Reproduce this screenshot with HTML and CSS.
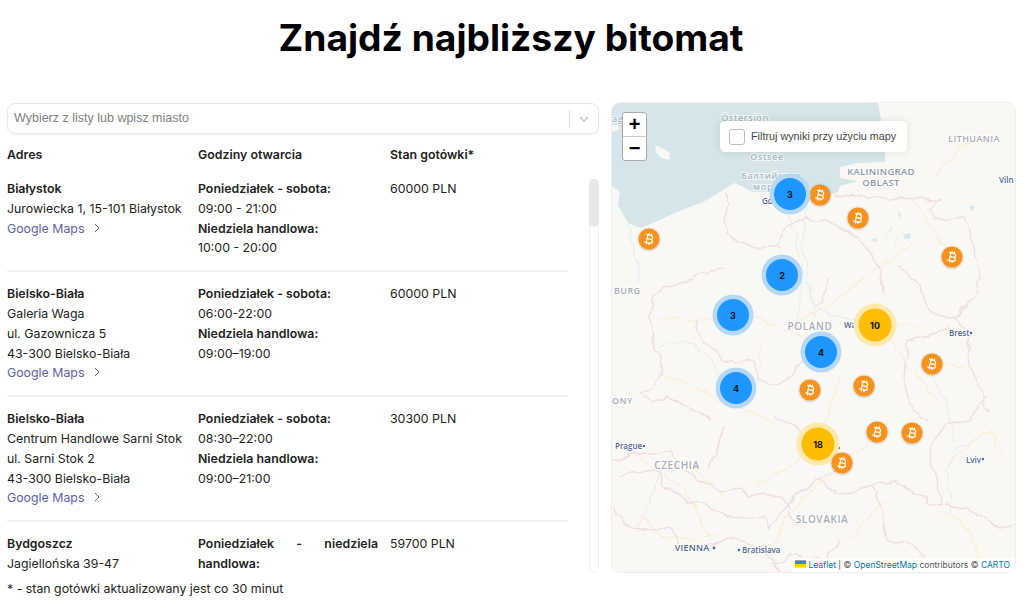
FILE: index.html
```html
<!DOCTYPE html>
<html lang="pl">
<head>
  <meta charset="UTF-8">
  <meta name="viewport" content="width=device-width, initial-scale=1.0">
  <title>Znajdź najbliższy bitomat</title>
  <link rel="stylesheet" href="styles.css">
</head>
<body>
  <h1>Znajdź najbliższy bitomat</h1>

  <div class="content">
    <div class="left">
      <div class="select">
        <span class="placeholder">Wybierz z listy lub wpisz miasto</span>
        <span class="select-sep"></span>
        <svg class="select-arrow" width="12" height="12" viewBox="0 0 12 12"><path d="M2 4l4 4 4-4" /></svg>
      </div>

      <div class="row head">
        <div>Adres</div>
        <div>Godziny otwarcia</div>
        <div>Stan gotówki*</div>
      </div>

      <div class="list-wrap">
        <div class="list">
          <div class="row item">
            <div>
              <b>Białystok</b><br>
              Jurowiecka 1, 15-101 Białystok<br>
              <a href="#">Google Maps <svg class="more" width="6" height="10" viewBox="0 0 6 10"><path d="M1 1l4 4-4 4" /></svg></a>
            </div>
            <div class="hours">
              <b>Poniedziałek - sobota:</b><br>
              09:00 - 21:00<br>
              <b>Niedziela handlowa:</b><br>
              10:00 - 20:00
            </div>
            <div>60000 PLN</div>
          </div>

          <div class="row item">
            <div>
              <b>Bielsko-Biała</b><br>
              Galeria Waga<br>
              ul. Gazownicza 5<br>
              43-300 Bielsko-Biała<br>
              <a href="#">Google Maps <svg class="more" width="6" height="10" viewBox="0 0 6 10"><path d="M1 1l4 4-4 4" /></svg></a>
            </div>
            <div class="hours">
              <b>Poniedziałek - sobota:</b><br>
              06:00-22:00<br>
              <b>Niedziela handlowa:</b><br>
              09:00–19:00
            </div>
            <div>60000 PLN</div>
          </div>

          <div class="row item">
            <div>
              <b>Bielsko-Biała</b><br>
              Centrum Handlowe Sarni Stok<br>
              ul. Sarni Stok 2<br>
              43-300 Bielsko-Biała<br>
              <a href="#">Google Maps <svg class="more" width="6" height="10" viewBox="0 0 6 10"><path d="M1 1l4 4-4 4" /></svg></a>
            </div>
            <div class="hours">
              <b>Poniedziałek - sobota:</b><br>
              08:30–22:00<br>
              <b>Niedziela handlowa:</b><br>
              09:00–21:00
            </div>
            <div>30300 PLN</div>
          </div>

          <div class="row item">
            <div>
              <b>Bydgoszcz</b><br>
              Jagiellońska 39-47
            </div>
            <div class="hours">
              <p class="just"><b>Poniedziałek - niedziela handlowa:</b></p>
            </div>
            <div>59700 PLN</div>
          </div>
        </div>
        <div class="scrollbar"><div class="thumb"></div></div>
      </div>

      <p class="note">* - stan gotówki aktualizowany jest co 30 minut</p>
    </div>

    <div class="map">
      <svg class="map-svg" viewBox="612 103 403 469" width="403" height="469">
        <defs>
          <filter id="soft"><feGaussianBlur stdDeviation="0.45" /></filter>
          <!-- makes the hand drawn lines wander like real borders -->
          <filter id="wiggle" x="0" y="0" width="100%" height="100%">
            <feTurbulence type="fractalNoise" baseFrequency="0.07" numOctaves="2" seed="4" result="noise" />
            <feDisplacementMap in="SourceGraphic" in2="noise" scale="9" xChannelSelector="R" yChannelSelector="G" />
            <feGaussianBlur stdDeviation="0.4" />
          </filter>
          <filter id="pin-shadow" x="-30%" y="-30%" width="160%" height="160%">
            <feDropShadow dx="0" dy="0.5" stdDeviation="1.2" flood-color="#000" flood-opacity="0.35" />
          </filter>
          <symbol id="btc" viewBox="0 0 24 24" overflow="visible">
            <circle cx="12" cy="12" r="11.5" fill="#f7931a" filter="url(#pin-shadow)" />
            <path transform="rotate(14 12 12) translate(3.6 3.6) scale(0.7)" fill="#fff" d="M17.06 11.57c.59-.69.94-1.59.94-2.57 0-1.86-1.27-3.43-3-3.87V3h-2v2h-2V3H9v2H6v2h2v10H6v2h3v2h2v-2h2v2h2v-2c2.21 0 4-1.79 4-4 0-1.45-.78-2.73-1.94-3.43zM10 7h4c1.1 0 2 .9 2 2s-.9 2-2 2h-4V7zm5 10h-5v-4h5c1.1 0 2 .9 2 2s-.9 2-2 2z" />
          </symbol>
        </defs>

        <rect class="land" x="612" y="103" width="403" height="469" />

        <g filter="url(#soft)">
          <!-- sea -->
          <path class="water" d="M612 103H878L880 115 885 138 885 162 858 163 840 167 840 178 858 181 840 186 838 192 828 195 815 192 805 184 790 186 780 182 773 192 753 192 735 183 723 190 703 202 677 212 653 223 640 228 628 223 618 205 620 192 612 186Z" />
          <path class="land" d="M655 145l7 3 8 5-1 7-8-2-5-6z" />
          <path class="land" d="M612 125h5l3 4-8 3z" />
          <path class="lake" d="M898 210l3 5-2 4zM903 235l7-2 1 5-6 1zM872 239l4-1 1 3-4 1zM969 205l6 2-3 4z" />
        </g>

        <g filter="url(#wiggle)">
          <!-- rivers -->
          <path class="river" d="M628 223l5 25 8 32M806 196l-4 40 8 50 6 30M790 215l14 60-8 50M735 395l-30-40-20-15-25 5M930 372l15 30 10 40M976 440l-20 8-10 25 6 40M660 470l-10 30-15 35M880 300l-25 20-25-5-20-12M884 240l8-12M900 235l-6 10" />

          <!-- roads -->
          <path class="road" d="M653 318H710L753 318 797 335 828 342M657 373l26 7 30 17 27 10 35 15M760 343v30M797 322l30-15 25-20 35-25 25-20M880 325l20 30 15 20 25 25M895 325h25M840 375l-15 50-30 40-40 20M985 380l-30-15-30-8M625 445l30 25 25 15 15 20 15 40M725 495l-30-25-10-15M720 535l-30 5-30-5-20-20M770 555l15-35 25-30 25-15M890 420l-30 30-25 15M950 460l40-30 15 30M905 190l30 40 20 40M990 130l-25 15-30 30M940 510l30 20 10 30M850 540l20-25 20-15" />

          <!-- admin borders -->
          <path class="border" d="M650 315l3-17 10-10 14-3 16-5 5-5 25-7M650 315l2 27 11 16-1 17-12 13-10 5 13 9 12-5 22 8 23 13M695 318l2 14 15 15 11 11 9 5 21-3 7 22 17 3 23-20 7-10M725 190l3 15-3 13 2 17 26 13 27 0M828 278l-5 20-8 10M900 265l8 13 14 10 6 20 20 12 7-2M908 342l27-9 13-5M908 342l-3 36 3 27 20 17M775 248l10-20 20-10 25 5 30 15 20 30 5 25M612 460l20-5 40-5 5 15 20 13 23 13 22-2 6 10 17-5 18 5 15 25M620 474l40-3 3 15 20 13 20 5 27 12 35 2 3 10 25-32 17-11 23-12 17-8-25-20-15-10-20-10-15-10M725 425l-15 45M612 508l18 20 25 2 15-3 10 20 25 0 30-10 30 15 15 20M835 196l107 4M942 200l-12 8 5 12 30-2 13 44M978 265v27l-23 26 15 17-3 20 8 23 13 34M815 478l22 15 8 2 27-10 23-3 20 10 17 11 11 1-8-28-3-20M935 475l-5-25 15-25 25-5 15-25M872 485l10 30 5 25 25 5 25 25M840 540l-15 20-30-5-25 10M945 503l30 10 25 15 15-5" />
        </g>

        <!-- labels -->
        <text class="lbl sea" x="612" y="122">age</text>
        <text class="lbl sea" x="745" y="121" text-anchor="middle">Östersjön</text>
        <text class="lbl sea" x="767" y="160" text-anchor="middle">Ostsee</text>
        <text class="lbl sea" x="771" y="179" text-anchor="middle">Балтийское</text>
        <text class="lbl sea" x="766" y="190" text-anchor="middle">море</text>
        <text class="lbl city" x="762" y="204">Gda</text>
        <text class="lbl region" x="881" y="175" text-anchor="middle">KALININGRAD</text>
        <text class="lbl region" x="881" y="186" text-anchor="middle">OBLAST</text>
        <text class="lbl country" x="974" y="142" text-anchor="middle">LITHUANIA</text>
        <text class="lbl city" x="999" y="183">Viln</text>
        <text class="lbl country" x="614" y="294">BURG</text>
        <text class="lbl country big" x="810" y="330" text-anchor="middle">POLAND</text>
        <text class="lbl city" x="844" y="328">Warsaw</text>
        <text class="lbl city" x="949" y="336">Brest</text>
        <circle class="dot" cx="971" cy="333" r="1.2" />
        <text class="lbl country" x="612" y="404">ONY</text>
        <text class="lbl city" x="615" y="449">Prague</text>
        <circle class="dot" cx="644" cy="446" r="1.2" />
        <text class="lbl country big" x="677" y="469" text-anchor="middle">CZECHIA</text>
        <text class="lbl city big" x="692" y="551" text-anchor="middle">VIENNA</text>
        <circle class="dot" cx="714" cy="548" r="1.4" />
        <circle class="dot" cx="739" cy="550" r="1.2" />
        <text class="lbl city" x="742" y="553">Bratislava</text>
        <text class="lbl country big" x="822" y="523" text-anchor="middle">SLOVAKIA</text>
        <text class="lbl city" x="966" y="463">Lviv</text>
        <circle class="dot" cx="983" cy="459" r="1.2" />
        <text class="lbl city" x="837" y="451" text-anchor="end">Kraków</text>
        <circle class="dot" cx="839" cy="448" r="1.2" />

        <!-- single machines -->
        <use href="#btc" x="809" y="184" width="22" height="22" />
        <use href="#btc" x="847" y="207" width="22" height="22" />
        <use href="#btc" x="638" y="228" width="22" height="22" />
        <use href="#btc" x="941" y="246" width="22" height="22" />
        <use href="#btc" x="921" y="353" width="22" height="22" />
        <use href="#btc" x="853" y="375" width="22" height="22" />
        <use href="#btc" x="799" y="379" width="22" height="22" />
        <use href="#btc" x="866" y="421" width="22" height="22" />
        <use href="#btc" x="901" y="422" width="22" height="22" />

        <!-- clusters -->
        <g class="cluster blue"><circle class="halo" cx="790" cy="194" r="20.5" /><circle cx="790" cy="194" r="16" /><text x="790" y="197.5">3</text></g>
        <g class="cluster blue"><circle class="halo" cx="782" cy="275" r="20.5" /><circle cx="782" cy="275" r="16" /><text x="782" y="278.5">2</text></g>
        <g class="cluster blue"><circle class="halo" cx="733" cy="315" r="20.5" /><circle cx="733" cy="315" r="16" /><text x="733" y="318.5">3</text></g>
        <g class="cluster blue"><circle class="halo" cx="821" cy="352" r="20.5" /><circle cx="821" cy="352" r="16" /><text x="821" y="355.5">4</text></g>
        <g class="cluster blue"><circle class="halo" cx="736" cy="388" r="20.5" /><circle cx="736" cy="388" r="16" /><text x="736" y="391.5">4</text></g>
        <g class="cluster yellow"><circle class="halo" cx="875" cy="325" r="21.5" /><circle cx="875" cy="325" r="16.5" /><text x="875" y="328.5">10</text></g>
        <g class="cluster yellow"><circle class="halo" cx="818" cy="444" r="21.5" /><circle cx="818" cy="444" r="16.5" /><text x="818" y="447.5">18</text></g>

        <use href="#btc" x="831" y="452" width="22" height="22" />
      </svg>

      <div class="zoom">
        <a href="#">+</a>
        <a href="#">−</a>
      </div>

      <label class="filter">
        <span class="check"></span>
        Filtruj wyniki przy użyciu mapy
      </label>

      <div class="attribution">
        <svg width="11" height="8" viewBox="0 0 12 8"><rect width="12" height="4" fill="#4c7be1" /><rect y="4" width="12" height="4" fill="#ffd500" /></svg>
        <a href="#">Leaflet</a> | © <a href="#">OpenStreetMap</a> contributors © <a href="#">CARTO</a>
      </div>
    </div>
  </div>
</body>
</html>
```

FILE: styles.css
```css
html, body {
  height: 100%;
  overflow: hidden;
}

body {
  margin: 0;
  padding: 0 9px 0 7px;
  background: #fff;
  color: #222;
  font-family: Inter, "Liberation Sans", sans-serif;
  font-size: 12.35px;
  line-height: 19.8px;
}

h1 {
  margin: 15px 0 42px;
  font-size: 37.2px;
  line-height: 46px;
  font-weight: 700;
  text-align: center;
  color: #000;
}

.content {
  display: flex;
  gap: 13px;
}

.left {
  width: 592px;
  flex: none;
}

/* city select */
.select {
  display: flex;
  align-items: center;
  height: 31px;
  box-sizing: border-box;
  padding-left: 6px;
  border: 1px solid #e6e6e6;
  border-radius: 8px;
  box-shadow: 0 1px 2px rgba(0, 0, 0, 0.05);
}

.placeholder {
  flex: 1;
  color: #808080;
  font-family: "Liberation Sans", sans-serif;
  font-size: 12.5px;
}

.select-sep {
  width: 1px;
  height: 18px;
  background: #ddd;
}

.select-arrow {
  margin: 0 8px;
}

.select-arrow path {
  fill: none;
  stroke: #c4c4c4;
  stroke-width: 1.5;
}

/* table */
.row {
  display: grid;
  grid-template-columns: 179px 180px 1fr;
  column-gap: 12px;
}

.head {
  margin-top: 11px;
  height: 34px;
  font-weight: 600;
}

.list-wrap {
  display: flex;
  height: 394px;
}

.list {
  width: 561px;
  margin-right: 21px;
  overflow: hidden;
}

.item {
  padding: 0 0 12px;
  margin-bottom: 12px;
  border-bottom: 2px solid #f1f1f1;
}

.item:last-child {
  padding-bottom: 0;
  margin-bottom: 0;
  border-bottom: 0;
}

.item b {
  font-weight: 600;
}

.item a {
  color: #5b5ea6;
  text-decoration: none;
}

.more {
  margin-left: 6px;
}

.more path {
  fill: none;
  stroke: #5b5ea6;
  stroke-width: 1;
}

.just {
  margin: 0;
  text-align: justify;
}

.scrollbar {
  width: 10px;
  box-sizing: border-box;
  border: 1px solid #f1f1f1;
  border-radius: 5px;
}

.thumb {
  height: 48px;
  margin: -1px;
  background: #e8e8e8;
  border-radius: 5px;
}

.note {
  margin: 6px 0 0;
}

/* map */
.map {
  position: relative;
  width: 403px;
  height: 469px;
  overflow: hidden;
  border-radius: 8px;
  box-shadow: 0 0 0 1px #eee;
}

.map-svg {
  display: block;
}

.land { fill: #faf8f5; }
.water { fill: #d5e5e9; }
.lake { fill: #d5e5e9; }
.river { fill: none; stroke: #e0edf0; stroke-width: 1; }
.road { fill: none; stroke: #fbeed6; stroke-width: 1.2; }
.border { fill: none; stroke: #eedfe0; stroke-width: 1.5; stroke-linejoin: round; }

.lbl {
  font-family: "Open Sans", sans-serif;
  font-size: 8px;
  font-weight: 600;
  paint-order: stroke;
  stroke: rgba(255, 255, 255, 0.8);
  stroke-width: 2px;
}

.lbl.city { fill: #50688f; }
.lbl.sea { fill: #a4b9c4; letter-spacing: 0.6px; font-size: 9px; }
.lbl.region { fill: #8e99ac; font-size: 9.5px; letter-spacing: 0.3px; }
.lbl.country { fill: #a9adb5; font-size: 9px; letter-spacing: 0.4px; }
.lbl.big { font-size: 10px; letter-spacing: 0.6px; }
.lbl.city.big { font-size: 9px; letter-spacing: 0.2px; }
.dot { fill: #50688f; }

.cluster text {
  font-family: Inter, sans-serif;
  font-size: 9px;
  font-weight: 700;
  fill: #111;
  text-anchor: middle;
}

.cluster.blue circle { fill: #1e96ff; }
.cluster.blue .halo { fill: #b5d8f8; }
.cluster.yellow circle { fill: #ffbd00; }
.cluster.yellow .halo { fill: #fde8ae; }

.zoom {
  position: absolute;
  left: 10px;
  top: 9px;
  width: 23px;
  border: 1px solid #aaa;
  border-radius: 3px;
  background: #fff;
}

.zoom a {
  display: block;
  height: 23px;
  text-align: center;
  color: #000;
  font: 700 20px/23px "Liberation Sans", sans-serif;
  text-decoration: none;
}

.zoom a:first-child {
  border-bottom: 1px solid #ccc;
}

.filter {
  position: absolute;
  left: 108px;
  top: 18px;
  display: flex;
  align-items: center;
  gap: 6px;
  width: 187px;
  height: 31px;
  box-sizing: border-box;
  padding-left: 9px;
  background: #fff;
  border-radius: 5px;
  box-shadow: 0 0 8px rgba(0, 0, 0, 0.1);
  color: #444;
  font-family: "Liberation Sans", sans-serif;
  font-size: 10.8px;
  white-space: nowrap;
}

.check {
  width: 14px;
  height: 14px;
  border: 1px solid #bbb;
  border-radius: 3px;
}

.attribution {
  position: absolute;
  right: 0;
  bottom: 0;
  padding: 0 5px 0 3px;
  background: rgba(255, 255, 255, 0.8);
  color: #555;
  font-size: 8.5px;
  line-height: 14px;
}

.attribution a {
  color: #0078a8;
  text-decoration: none;
}
```
